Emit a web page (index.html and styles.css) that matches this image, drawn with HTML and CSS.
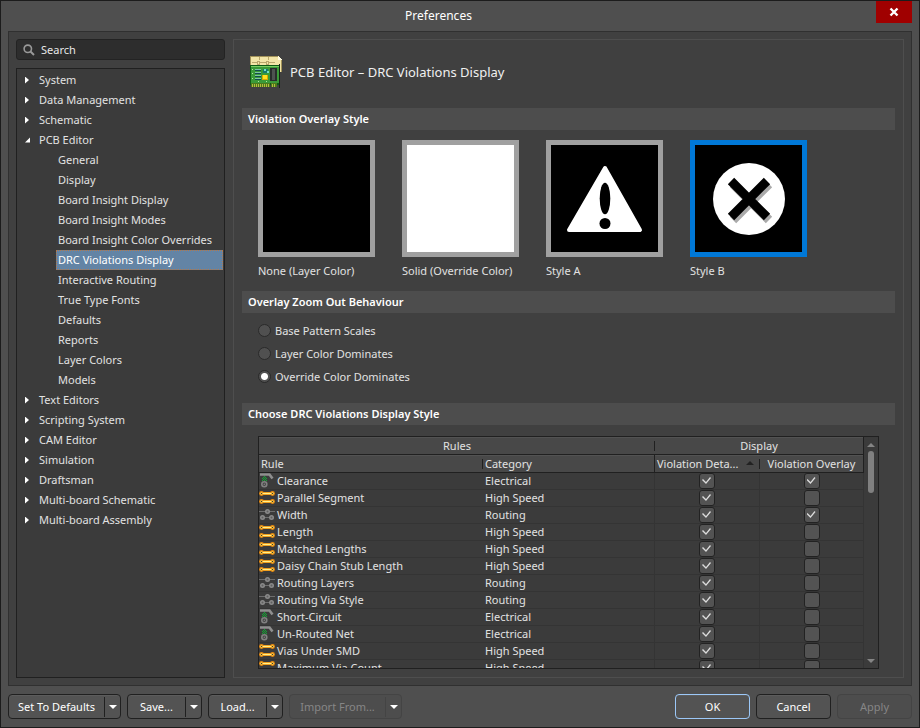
FILE: index.html
```html
<!DOCTYPE html>
<html lang="en">
	<head>
		<meta charset="UTF-8">
		<title>Preferences</title>
		<link rel="stylesheet" href="styles.css">
	</head>
	<body>
		<svg class="defs" width="0" height="0" aria-hidden="true">
			<symbol id="electrical" viewBox="0 0 16 16">
				<path d="M1 1.500h9.500l3 4" fill="none" stroke="#8f8f8f" stroke-width="2.600"/>
				<path d="M5 3h1v1H5zM4 4h1v1H4zM6 4h1v1H6zM3 5h1v1H3zM5 5h1v1H5zM7 5h1v1H7zM4 6h1v1H4zM6 6h1v1H6zM3 7h1v1H3zM5 7h1v1H5zM7 7h1v1H7z" fill="#12a834"/>
				<circle cx="5.300" cy="11.300" r="2.500" fill="#444" stroke="#808080" stroke-width="1.600"/>
				<circle cx="5.300" cy="11.300" r=".8" fill="#808080"/>
			</symbol>
			<symbol id="speed" viewBox="0 0 16 16">
				<path d="M2.500 3.500h11M2.500 11.500h11" stroke="#f0a020" stroke-width="3"/>
				<g fill="#f08c0c">
					<circle cx="2.500" cy="3.500" r="2.400"/><circle cx="13.500" cy="3.500" r="2.400"/>
					<circle cx="2.500" cy="11.500" r="2.400"/><circle cx="13.500" cy="11.500" r="2.400"/>
				</g>
				<path d="M4 3.500h8M4 11.500h8" stroke="#fff08a"/>
				<g fill="#4a3a20" stroke="#ffdf60" stroke-width=".8">
					<circle cx="2.500" cy="3.500" r="1"/><circle cx="13.500" cy="3.500" r="1"/>
					<circle cx="2.500" cy="11.500" r="1"/><circle cx="13.500" cy="11.500" r="1"/>
				</g>
			</symbol>
			<symbol id="routing" viewBox="0 0 16 16">
				<path d="M0 4.500h16M3 10.500h10" stroke="#6e6e6e"/>
				<g fill="#8a8a8a">
					<circle cx="8.500" cy="4.500" r="2.500"/><circle cx="3.500" cy="10.500" r="2.500"/><circle cx="12.500" cy="10.500" r="2.500"/>
				</g>
				<g fill="#606060">
					<circle cx="8.500" cy="4.500" r="1"/><circle cx="3.500" cy="10.500" r="1"/><circle cx="12.500" cy="10.500" r="1"/>
				</g>
			</symbol>
		</svg>

		<div class="window">
			<header class="titlebar">
				<h1 class="caption">Preferences</h1>
				<button class="close" type="button" aria-label="Close">
					<svg width="10" height="10" viewBox="0 0 10 10"><path d="M1.500 1.500l7 7M8.500 1.500l-7 7" stroke="#fff" stroke-width="2.400"/></svg>
				</button>
			</header>

			<main class="frame">
				<div class="side">
					<div class="search">
						<svg width="12" height="12" viewBox="0 0 12 12"><circle cx="4.800" cy="4.800" r="3.700" fill="none" stroke="#999" stroke-width="1.600"/><path d="M7.500 7.500l3.500 3.500" stroke="#999" stroke-width="2"/></svg>
						<input type="text" placeholder="Search" aria-label="Search">
					</div>
					<nav class="tree">
						<ul class="list">
							<li><a class="node" href="#">System</a></li>
							<li><a class="node" href="#">Data Management</a></li>
							<li><a class="node" href="#">Schematic</a></li>
							<li>
								<a class="node open" href="#">PCB Editor</a>
								<ul class="list sub">
									<li><a class="leaf" href="#">General</a></li>
									<li><a class="leaf" href="#">Display</a></li>
									<li><a class="leaf" href="#">Board Insight Display</a></li>
									<li><a class="leaf" href="#">Board Insight Modes</a></li>
									<li><a class="leaf" href="#">Board Insight Color Overrides</a></li>
									<li><a class="leaf active" href="#">DRC Violations Display</a></li>
									<li><a class="leaf" href="#">Interactive Routing</a></li>
									<li><a class="leaf" href="#">True Type Fonts</a></li>
									<li><a class="leaf" href="#">Defaults</a></li>
									<li><a class="leaf" href="#">Reports</a></li>
									<li><a class="leaf" href="#">Layer Colors</a></li>
									<li><a class="leaf" href="#">Models</a></li>
								</ul>
							</li>
							<li><a class="node" href="#">Text Editors</a></li>
							<li><a class="node" href="#">Scripting System</a></li>
							<li><a class="node" href="#">CAM Editor</a></li>
							<li><a class="node" href="#">Simulation</a></li>
							<li><a class="node" href="#">Draftsman</a></li>
							<li><a class="node" href="#">Multi-board Schematic</a></li>
							<li><a class="node" href="#">Multi-board Assembly</a></li>
						</ul>
					</nav>
				</div>

				<div class="page">
					<div class="heading">
						<svg width="32" height="32" viewBox="0 0 32 32" shape-rendering="crispEdges">
							<path d="M0 0h28l4 4v12H0z" fill="#f3e6a8"/>
							<path d="M0 0h28v1H0zM0 0h1v16H0zM31 4h1v12h-1z" fill="#a3935a"/>
							<path d="M28 0l4 4h-4z" fill="#fffbe0"/>
							<path d="M9 1v3M18 1v3M2 6h5M9 6h7M19 6h6M7 5v3h2V5zM16 5v3h2V5z" fill="none" stroke="#b9a76c"/>
							<path d="M0 9h30v20H0z" fill="#0f5a16"/>
							<path d="M1 10h28v17H1z" fill="#3a9a38"/>
							<path d="M1 10h28v1H1z" fill="#77ce62"/>
							<path d="M29 8h1v24h-1z" fill="#172416"/>
							<path d="M1 27h19v4H1zM21 27h6v4h-6z" fill="#4c7a1c"/>
							<path d="M2 29h17M22 29h4" stroke="#b4bc3d" stroke-width="3" stroke-dasharray="1 1"/>
							<path d="M5 13h6v2H5zM5 16h6v2H5zM5 19h6v2H5zM5 22h6v2H5z" fill="#124d4c"/>
							<path d="M5 13h6v1H5zM5 16h6v1H5zM5 19h6v1H5zM5 22h6v1H5z" fill="#7dc5a5"/>
							<path d="M13 13h5v4h-5z" fill="#15796e"/>
							<path d="M14 13h2v2h-2zM17 15h2v2h-2z" fill="#73e0c2"/>
							<path d="M12 19h6v5h-6z" fill="#d9a900"/>
							<path d="M13 19h4v4h-4z" fill="#ffe21f"/>
							<path d="M20 12h7v13h-7z" fill="#292d2c"/>
							<path d="M22 13h3v11h-3z" fill="#4d5350"/>
							<path d="M2 13h1v1H2zM2 17h1v1H2zM2 22h1v1H2zM8 25h1v1H8zM16 25h1v1h-1z" fill="#b1e6a0"/>
						</svg>
						<h2>PCB Editor – DRC Violations Display</h2>
					</div>

					<h3 class="bar">Violation Overlay Style</h3>
					<div class="styles">
						<button class="style" type="button">
							<span class="tile"></span>
							<span>None (Layer Color)</span>
						</button>
						<button class="style" type="button">
							<span class="tile solid"></span>
							<span>Solid (Override Color)</span>
						</button>
						<button class="style" type="button">
							<span class="tile">
								<svg viewBox="0 0 107 107">
									<path d="M54 23L89 85H18z" fill="#fff" stroke="#fff" stroke-width="4" stroke-linejoin="round"/>
									<ellipse cx="54" cy="53.500" rx="5.300" ry="15.800"/>
									<circle cx="54" cy="78.500" r="5.500"/>
								</svg>
							</span>
							<span>Style A</span>
						</button>
						<button class="style picked" type="button">
							<span class="tile">
								<svg viewBox="0 0 107 107">
									<circle cx="54" cy="54" r="36" fill="#fff"/>
									<path d="M38 39l36 36M74 39L38 75" stroke="#aaa" stroke-width="9"/>
									<path d="M36 36l36 36M72 36L36 72" stroke="#000" stroke-width="9"/>
								</svg>
							</span>
							<span>Style B</span>
						</button>
					</div>

					<h3 class="bar">Overlay Zoom Out Behaviour</h3>
					<div class="radios">
						<label><input type="radio" name="zoom">Base Pattern Scales</label>
						<label><input type="radio" name="zoom">Layer Color Dominates</label>
						<label><input type="radio" name="zoom" checked>Override Color Dominates</label>
					</div>

					<h3 class="bar">Choose DRC Violations Display Style</h3>
					<div class="grid">
						<div class="view">
							<table>
								<colgroup>
									<col class="c-rule">
									<col>
									<col class="c-details">
									<col class="c-overlay">
								</colgroup>
								<thead>
									<tr>
										<th class="mid tick" colspan="2">Rules</th>
										<th class="mid" colspan="2">Display</th>
									</tr>
									<tr>
										<th class="tick">Rule</th>
										<th class="full">Category</th>
										<th class="tick sort">Violation Deta...</th>
										<th class="mid">Violation Overlay</th>
									</tr>
								</thead>
								<tbody id="rules"></tbody>
							</table>
						</div>
						<div class="scroll">
							<i class="up"></i>
							<i class="thumb"></i>
							<i class="down"></i>
						</div>
					</div>
				</div>
			</main>

			<footer class="footer">
				<div class="split w-big">
					<button type="button">Set To Defaults</button>
					<button class="drop" type="button" aria-label="Set To Defaults menu"></button>
				</div>
				<div class="split">
					<button type="button">Save...</button>
					<button class="drop" type="button" aria-label="Save menu"></button>
				</div>
				<div class="split">
					<button type="button">Load...</button>
					<button class="drop" type="button" aria-label="Load menu"></button>
				</div>
				<div class="split w-big off">
					<button type="button" disabled>Import From...</button>
					<button class="drop" type="button" aria-label="Import From menu"></button>
				</div>
				<button class="btn ok" type="button">OK</button>
				<button class="btn" type="button">Cancel</button>
				<button class="btn" type="button" disabled>Apply</button>
			</footer>
		</div>

		<script src="rules.js"></script>
	</body>
</html>
```

FILE: styles.css
```css
*{
	box-sizing: border-box;
	margin: 0;
	padding: 0;
}
body{
	font-family: "Noto Sans", "Open Sans", sans-serif;
	font-size: 11px;
	line-height: 16px;
	color: #e2e2e2;
	background: #4f4f4f;
}
ul{
	list-style: none;
}
a{
	color: inherit;
	text-decoration: none;
}
button, input{
	font: inherit;
	color: inherit;
	border: 0;
	background: none;
}
svg{
	display: block;
	flex: none;
}
.defs{
	position: absolute;
}
.window{
	display: flex;
	flex-direction: column;
	height: 100vh;
	border: 1px solid #1c1c1c;
}

/* title bar */
.titlebar{
	display: flex;
	align-items: flex-start;
	height: 30px;
	padding-right: 7px;
}
.caption{
	flex: 1;
	font-size: 12px;
	font-weight: normal;
	line-height: 30px;
	text-align: center;
	color: #fff;
}
.close{
	display: flex;
	align-items: center;
	justify-content: center;
	width: 36px;
	height: 22px;
	background: #a00000;
}

.frame{
	display: flex;
	flex: 1;
	gap: 8px;
	min-height: 0;
	margin: 0 7px;
	padding: 7px;
	border: 1px solid #303030;
	background: #404040;
}

/* left side */
.side{
	display: flex;
	flex-direction: column;
	gap: 8px;
	width: 209px;
}
.search{
	display: flex;
	align-items: center;
	gap: 6px;
	height: 21px;
	padding-left: 6px;
	border: 1px solid #232323;
	border-radius: 3px;
	background: #2d2d2d;
}
.search input{
	flex: 1;
	min-width: 0;
	outline: 0;
}
.search input::placeholder{
	color: #e8e8e8;
	opacity: 1;
}
.tree{
	flex: 1;
	min-height: 0;
	padding: 1px;
	overflow: hidden;
	border: 1px solid #202020;
	background: #3b3b3b;
}
.node{
	display: flex;
	align-items: center;
	height: 20px;
	padding-left: 7px;
}
.node::before{
	content: "";
	width: 14px;
	height: 7px;
	background: #fff;
	clip-path: polygon(0 0, 4px 50%, 0 100%);
}
.node.open::before{
	clip-path: polygon(5px 1px, 5px 6px, 0 6px);
}
.sub{
	padding-left: 38px;
}
.leaf{
	display: block;
	height: 20px;
	padding-left: 1px;
	line-height: 18px;
	border: 1px solid transparent;
}
.leaf.active{
	border: 1px dotted #b5794a;
	background: #6384a5;
	color: #fff;
}

/* right side */
.page{
	display: flex;
	flex: 1;
	flex-direction: column;
	min-width: 0;
	padding: 16px 8px 8px;
	border: 1px solid #4e4e4e;
}
.heading{
	display: flex;
	align-items: center;
	gap: 8px;
	margin-bottom: 20px;
	padding-left: 8px;
}
.heading h2{
	font-size: 13px;
	font-weight: normal;
	color: #f0f0f0;
}
.bar{
	height: 22px;
	padding-left: 6px;
	font-size: 11px;
	font-weight: 600;
	line-height: 22px;
	color: #fff;
	background: #4d4d4d;
}
.styles{
	display: flex;
	gap: 27px;
	padding: 10px 16px 12px;
}
.style{
	display: flex;
	flex-direction: column;
	gap: 6px;
	width: 117px;
	text-align: left;
	white-space: nowrap;
}
.tile{
	width: 117px;
	height: 117px;
	border: 5px solid #a0a0a0;
	background: #000;
}
.tile.solid{
	background: #fff;
}
.picked .tile{
	border-color: #0078d7;
}
.radios{
	padding: 6px 16px 15px;
}
.radios label{
	display: flex;
	align-items: center;
	gap: 4px;
	height: 23px;
}
.radios input{
	appearance: none;
	width: 13px;
	height: 13px;
	border: 1px solid #2a2a2a;
	border-radius: 50%;
	background: #505050;
}
.radios input:checked{
	background: radial-gradient(circle, #fff 3px, #505050 4px);
}

/* rules table */
.grid{
	display: flex;
	flex: 1;
	min-height: 0;
	margin: 11px 16px 0;
	border: 1px solid #202020;
	background: #3b3b3b;
}
.view{
	flex: 1;
	min-width: 0;
	overflow: hidden;
}
table{
	width: 100%;
	table-layout: fixed;
	border-collapse: separate;
	border-spacing: 0;
}
.c-rule{
	width: 224px;
}
.c-details{
	width: 105px;
}
.c-overlay{
	width: 104px;
}
th{
	position: relative;
	height: 18px;
	padding: 0 2px;
	font-weight: normal;
	line-height: 16px;
	text-align: left;
	white-space: nowrap;
	border-bottom: 1px solid #202020;
	background: #484848;
	box-shadow: inset 0 1px #525252;
}
th.mid{
	text-align: center;
}
th:last-child, th.full{
	border-right: 1px solid #202020;
}
th.tick::after{
	content: "";
	position: absolute;
	top: 4px;
	right: 0;
	width: 1px;
	height: 10px;
	background: #202020;
}
th.sort::before{
	content: "";
	position: absolute;
	top: 6px;
	right: 6px;
	border: 4px solid transparent;
	border-top: 0;
	border-bottom-color: #222;
}
td{
	height: 17px;
	padding: 0 2px;
	line-height: 16px;
	border-right: 1px solid #343434;
	border-bottom: 1px solid #343434;
}
td:first-child{
	padding: 0;
	border-right: 0;
}
.rule{
	display: flex;
	gap: 2px;
	height: 16px;
}
.check{
	display: block;
	height: 16px;
}
.check input{
	display: block;
	appearance: none;
	width: 16px;
	height: 16px;
	margin: 0 auto;
	border: 1px solid #222;
	border-radius: 3px;
	background: #535353;
}
.check input:checked::before{
	content: "";
	display: block;
	width: 10px;
	height: 7px;
	margin: 3px 2px;
	background: #dcdcdc;
	clip-path: polygon(0 3px, 1px 2px, 4px 5px, 8px 0, 9px 1px, 4px 7px);
}
.scroll{
	display: flex;
	flex-direction: column;
	align-items: center;
	width: 14px;
	padding: 6px 0 5px;
}
.up, .down{
	width: 8px;
	height: 4px;
	background: #858585;
	clip-path: polygon(50% 0, 100% 100%, 0 100%);
}
.down{
	margin-top: auto;
	clip-path: polygon(0 0, 100% 0, 50% 100%);
}
.thumb{
	width: 6px;
	height: 42px;
	margin-top: 4px;
	border-radius: 3px;
	background: #808080;
}

/* bottom buttons */
.footer{
	display: flex;
	gap: 6px;
	padding: 8px 7px;
}
.split, .btn{
	width: 75px;
	height: 25px;
	border: 1px solid #202020;
	border-radius: 4px;
	background: #535353;
	box-shadow: inset 0 1px #5c5c5c;
	color: #fff;
}
.split{
	display: flex;
	align-items: center;
}
.split.w-big{
	width: 113px;
}
.split button{
	flex: 1;
	height: 23px;
	white-space: nowrap;
}
.split .drop{
	display: flex;
	flex: none;
	align-items: center;
	justify-content: center;
	width: 16px;
	height: 20px;
	border-left: 1px solid #202020;
}
.drop::before{
	content: "";
	border: 4px solid transparent;
	border-top-color: #fff;
	border-bottom: 0;
}
.split.off, .btn:disabled{
	border-color: #444;
	background: #4d4d4d;
	box-shadow: none;
}
.split.off .drop{
	border-color: #444;
}
button:disabled{
	color: #868686;
}
.ok{
	margin-left: auto;
	border-color: #9cc8f8;
}
```

FILE: rules.js
```js
(function(){
	// name, category, icon, violation details, violation overlay
	let rules = [
		['Clearance', 'Electrical', 'electrical', true, true],
		['Parallel Segment', 'High Speed', 'speed', true, false],
		['Width', 'Routing', 'routing', true, true],
		['Length', 'High Speed', 'speed', true, false],
		['Matched Lengths', 'High Speed', 'speed', true, false],
		['Daisy Chain Stub Length', 'High Speed', 'speed', true, false],
		['Routing Layers', 'Routing', 'routing', true, false],
		['Routing Via Style', 'Routing', 'routing', true, false],
		['Short-Circuit', 'Electrical', 'electrical', true, false],
		['Un-Routed Net', 'Electrical', 'electrical', true, false],
		['Vias Under SMD', 'High Speed', 'speed', true, false],
		['Maximum Via Count', 'High Speed', 'speed', true, false]
	];

	function check(name, on){
		return '<td><label class="check"><input type="checkbox" aria-label="' + name + '"' + (on ? ' checked' : '') + '></label></td>';
	}

	let html = '';
	for(let i = 0; i < rules.length; i++){
		let r = rules[i];
		html += '<tr><td><div class="rule"><svg width="16" height="16"><use href="#' + r[2] + '"/></svg>' + r[0] + '</div></td>'
			+ '<td>' + r[1] + '</td>'
			+ check(r[0] + ' details', r[3])
			+ check(r[0] + ' overlay', r[4]) + '</tr>';
	}
	document.querySelector('#rules').innerHTML = html;
})()
```
